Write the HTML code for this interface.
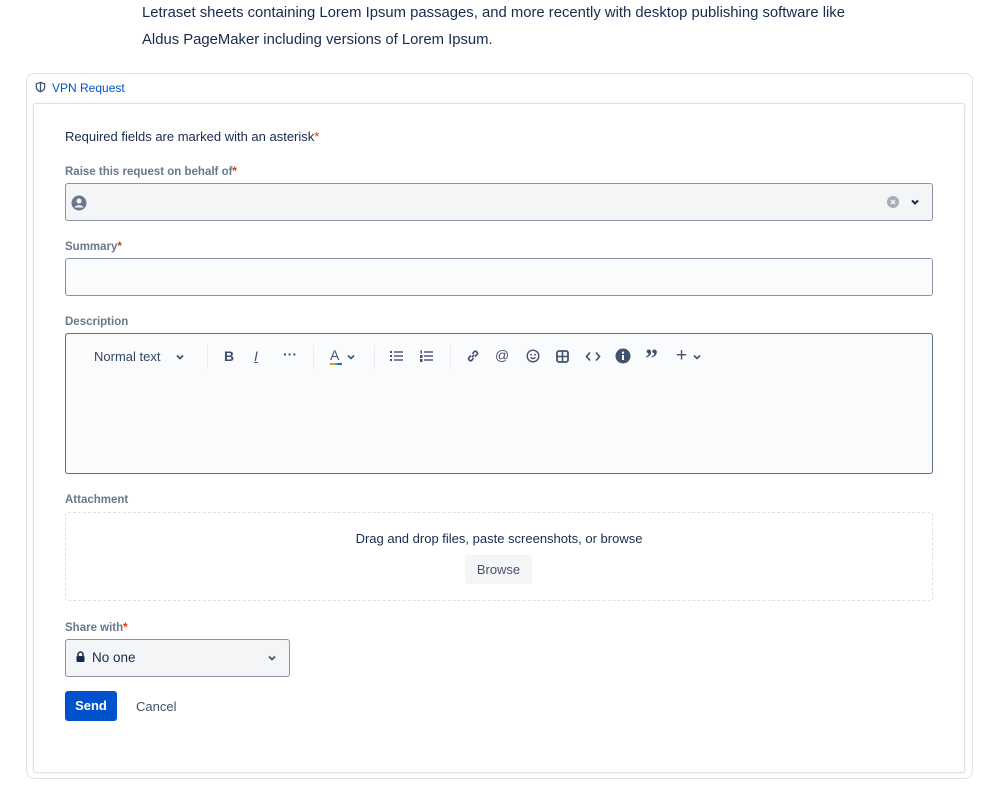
<!DOCTYPE html>
<html><head><meta charset="utf-8"><style>
*{box-sizing:border-box;margin:0;padding:0}
body{width:999px;height:808px;background:#fff;font-family:"Liberation Sans",sans-serif;color:#172b4d;position:relative;overflow:hidden}
.a{position:absolute;white-space:nowrap}
.lbl{font-size:11.5px;font-weight:600;color:#6b778c}
.req{color:#de350b}
.inp{position:absolute;left:65px;width:868px;border:1px solid #8993a4;border-radius:3px;background:#f4f5f7}
svg{display:block}
</style></head><body>
<div class="a" style="left:142px;top:0px;font-size:14.85px;line-height:27px">Letraset sheets containing Lorem Ipsum passages, and more recently with desktop publishing software like<br>Aldus PageMaker including versions of Lorem Ipsum.</div>

<div class="a" style="left:26px;top:73px;width:947px;height:706px;border:1px solid #dfe1e6;border-radius:8px"></div>
<div class="a" style="left:35px;top:81px"><svg width="11" height="12" viewBox="0 0 12 12"><path d="M6 1 L10.5 2.5 V6 C10.5 9 8 10.5 6 11.2 C4 10.5 1.5 9 1.5 6 V2.5 Z" fill="none" stroke="#42526e" stroke-width="1.4"/><path d="M6 1.5V10.8" stroke="#42526e" stroke-width="1.4"/></svg></div>
<div class="a" style="left:52px;top:81px;font-size:12px;color:#0052cc">VPN Request</div>
<div class="a" style="left:33px;top:103px;width:932px;height:670px;border:1px solid #dfe1e6;border-radius:3px;box-shadow:0 0 1px #ccc"></div>

<div class="a" style="left:65px;top:129px;font-size:13px">Required fields are marked with an asterisk<span class="req">*</span></div>

<div class="a lbl" style="left:65px;top:166px">Raise this request on behalf of<span class="req">*</span></div>
<div class="inp" style="top:183px;height:38px"></div>
<div class="a" style="left:71px;top:195px"><svg width="16" height="16" viewBox="0 0 16 16"><circle cx="8" cy="8" r="7.5" fill="#6b778c"/><circle cx="8" cy="6" r="2.5" fill="#f4f5f7"/><path d="M3.5 12.5 C4.5 9.5 11.5 9.5 12.5 12.5 Z" fill="#f4f5f7"/></svg></div>
<div class="a" style="left:887px;top:196px"><svg width="12" height="12" viewBox="0 0 12 12"><circle cx="6" cy="6" r="6" fill="#a5adba"/><path d="M4 4L8 8M8 4L4 8" stroke="#f4f5f7" stroke-width="1.5"/></svg></div>
<div class="a" style="left:910px;top:198px"><svg width="10" height="8" viewBox="0 0 10 8"><path d="M2 2.5L5 5.5L8 2.5" fill="none" stroke="#172b4d" stroke-width="2"/></svg></div>

<div class="a lbl" style="left:65px;top:241px">Summary<span class="req">*</span></div>
<div class="inp" style="top:258px;height:38px;background:#fafbfc"></div>

<div class="a lbl" style="left:65px;top:316px">Description</div>
<div class="inp" style="top:333px;height:141px;background:#fafbfc;border-color:#5e6c84"></div>
<div class="a" style="left:94px;top:349px;font-size:13px;color:#344563">Normal text</div>
<div class="a" style="left:175px;top:353px"><svg width="10" height="8"><path d="M2 2.5L5 5.5L8 2.5" fill="none" stroke="#42526e" stroke-width="1.8"/></svg></div>
<div class="a" style="left:207px;top:345px;width:1px;height:24px;background:#ebecf0"></div>
<div class="a" style="left:224px;top:348px;font-size:14px;font-weight:bold;color:#42526e">B</div>
<div class="a" style="left:254px;top:348px;font-size:14px;font-style:italic;color:#42526e;text-decoration:underline">I</div>
<div class="a" style="left:283px;top:346px;font-size:14px;font-weight:bold;color:#42526e">···</div>
<div class="a" style="left:313px;top:345px;width:1px;height:24px;background:#ebecf0"></div>
<div class="a" style="left:330px;top:347px;font-size:14px;color:#42526e">A</div>
<div class="a" style="left:330px;top:363px;width:12px;height:2px;background:linear-gradient(90deg,#ff5630,#ffab00,#36b37e,#0065ff,#6554c0)"></div>
<div class="a" style="left:346px;top:353px"><svg width="10" height="8"><path d="M2 2.5L5 5.5L8 2.5" fill="none" stroke="#42526e" stroke-width="1.6"/></svg></div>
<div class="a" style="left:374px;top:345px;width:1px;height:24px;background:#ebecf0"></div>
<div class="a" style="left:390px;top:350px"><svg width="13" height="12" viewBox="0 0 13 12"><g fill="#42526e"><rect x="0" y="1" width="2" height="2"/><rect x="0" y="5" width="2" height="2"/><rect x="0" y="9" width="2" height="2"/><rect x="4" y="1.3" width="9" height="1.4"/><rect x="4" y="5.3" width="9" height="1.4"/><rect x="4" y="9.3" width="9" height="1.4"/></g></svg></div>
<div class="a" style="left:420px;top:350px"><svg width="13" height="12" viewBox="0 0 13 12"><g fill="#42526e"><rect x="0.5" y="0.5" width="1.5" height="3"/><rect x="0" y="5" width="2.5" height="3"/><rect x="0" y="9" width="2.5" height="3"/><rect x="4" y="1.3" width="9" height="1.4"/><rect x="4" y="5.3" width="9" height="1.4"/><rect x="4" y="9.3" width="9" height="1.4"/></g></svg></div>
<div class="a" style="left:450px;top:345px;width:1px;height:24px;background:#ebecf0"></div>
<div class="a" style="left:466px;top:349px"><svg width="14" height="14" viewBox="0 0 14 14"><g fill="none" stroke="#42526e" stroke-width="1.6"><path d="M6 8L8 6"/><path d="M5 6.5L3 8.5a2 2 0 0 0 2.8 2.8L7.5 9"/><path d="M9 7.5L11 5.5a2 2 0 0 0-2.8-2.8L6.5 5"/></g></svg></div>
<div class="a" style="left:495px;top:347px;font-size:14px;color:#42526e">@</div>
<div class="a" style="left:526px;top:349px"><svg width="14" height="14" viewBox="0 0 14 14"><circle cx="7" cy="7" r="5.8" fill="none" stroke="#42526e" stroke-width="1.4"/><circle cx="5" cy="5.8" r="0.9" fill="#42526e"/><circle cx="9" cy="5.8" r="0.9" fill="#42526e"/><path d="M4.5 8.3Q7 10.8 9.5 8.3" fill="none" stroke="#42526e" stroke-width="1.3"/></svg></div>
<div class="a" style="left:556px;top:350px"><svg width="13" height="13" viewBox="0 0 13 13"><rect x="1" y="1" width="11" height="11" rx="2" fill="none" stroke="#42526e" stroke-width="1.8"/><path d="M6.5 1V12M1 6.5H12" stroke="#42526e" stroke-width="1.6"/></svg></div>
<div class="a" style="left:585px;top:351px"><svg width="16" height="11" viewBox="0 0 16 11"><path d="M5 1.5L1.5 5.5L5 9.5M11 1.5L14.5 5.5L11 9.5" fill="none" stroke="#42526e" stroke-width="1.7"/></svg></div>
<div class="a" style="left:615px;top:348px"><svg width="16" height="16" viewBox="0 0 16 16"><circle cx="8" cy="8" r="7.5" fill="#42526e"/><rect x="7" y="7" width="2" height="5" fill="#fff"/><circle cx="8" cy="4.7" r="1.2" fill="#fff"/></svg></div>
<div class="a" style="left:645px;top:346px;font-size:26px;font-weight:bold;color:#42526e;font-family:'Liberation Serif',serif;line-height:26px">”</div>
<div class="a" style="left:676px;top:345px;font-size:19px;color:#42526e">+</div>
<div class="a" style="left:692px;top:353px"><svg width="10" height="8"><path d="M2 2.5L5 5.5L8 2.5" fill="none" stroke="#42526e" stroke-width="1.6"/></svg></div>

<div class="a lbl" style="left:65px;top:494px">Attachment</div>
<div class="a" style="left:65px;top:512px;width:868px;height:89px;border:1px dashed #dfe1e6;border-radius:3px"></div>
<div class="a" style="left:65px;top:531px;width:868px;text-align:center;font-size:13px">Drag and drop files, paste screenshots, or browse</div>
<div class="a" style="left:465px;top:555px;width:67px;height:29px;background:#f4f5f7;border-radius:3px;text-align:center;font-size:13px;line-height:29px;color:#42526e">Browse</div>

<div class="a lbl" style="left:65px;top:622px">Share with<span class="req">*</span></div>
<div class="a" style="left:65px;top:639px;width:225px;height:38px;border:1px solid #8993a4;border-radius:3px;background:#f4f5f7"></div>
<div class="a" style="left:76px;top:651px"><svg width="9" height="11" viewBox="0 0 9 11"><path d="M2 5V3.5a2.5 2.5 0 0 1 5 0V5" fill="none" stroke="#172b4d" stroke-width="1.5"/><rect x="0.5" y="5" width="8" height="6" rx="1" fill="#172b4d"/></svg></div>
<div class="a" style="left:92px;top:650px;font-size:13.5px">No one</div>
<div class="a" style="left:267px;top:654px"><svg width="10" height="8"><path d="M2 2.5L5 5.5L8 2.5" fill="none" stroke="#42526e" stroke-width="1.8"/></svg></div>

<div class="a" style="left:65px;top:691px;width:52px;height:30px;background:#0052cc;border-radius:3px;color:#fff;font-weight:bold;font-size:13px;text-align:center;line-height:30px">Send</div>
<div class="a" style="left:136px;top:699px;font-size:13px;color:#42526e">Cancel</div>
</body></html>
